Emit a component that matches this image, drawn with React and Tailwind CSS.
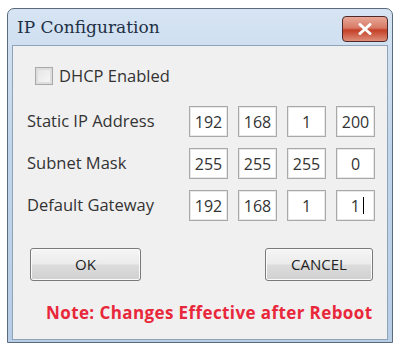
import React, { useState } from 'react';

const IpBox = ({ value, caret }) => (
  <div className="w-[39px] h-[31px] border border-[#a9a9a9] bg-white shadow-[inset_0_0_0_1px_#e8e8e8] flex items-center justify-center text-[16px] text-[#333]">
    {caret ? (
      <span className="flex items-center w-full justify-end pr-[10px]">
        {value}
        <span className="ml-[3px] w-px h-[17px] bg-black" />
      </span>
    ) : (
      value
    )}
  </div>
);

const IpRow = ({ label, values, caret }) => (
  <div className="flex items-center h-[31px]">
    <div className="w-[176px] pl-[14px] text-[16.5px] text-[#333]">{label}</div>
    <div className="flex gap-[10px]">
      {values.map((v, i) => (
        <IpBox key={i} value={v} caret={caret && i === values.length - 1} />
      ))}
    </div>
  </div>
);

const WinButton = ({ children, className }) => (
  <button
    type="button"
    className={`h-[33px] rounded-[3px] border border-[#7a7a7a] bg-[linear-gradient(to_bottom,#f6f6f6_0%,#ebebeb_48%,#dcdcdc_52%,#d0d0d0_100%)] shadow-[inset_0_0_0_1px_#fbfbfb] text-[15px] text-[#222] ${className}`}
  >
    {children}
  </button>
);

const App = () => {
  const [dhcp, setDhcp] = useState(false);

  return (
    <div className="w-[398px] h-[346px] bg-white pt-[8px] pl-[7px]" style={{ fontFamily: '"Open Sans", "Noto Sans", sans-serif' }}>
      <div className="w-[386px] h-[335px] rounded-t-[7px] border border-[#5a6b7c] bg-[linear-gradient(to_bottom,#d6e4f3,#c1d5ea_40%,#b7cde5)] flex flex-col">
        {/* title bar */}
        <div className="h-[36px] flex items-center justify-between pl-[9px] pr-[4px]">
          <span className="text-[17px] text-[#1e3045] mt-[2px]" style={{ fontFamily: '"DejaVu Serif", serif' }}>
            IP Configuration
          </span>
          <div className="w-[46px] h-[26px] mt-[3px] rounded-[4px] border border-[#4e2a2a] bg-[linear-gradient(to_bottom,#e9a898_0%,#d77a66_45%,#c43f28_55%,#df8f7a_100%)] flex items-center justify-center">
            <svg width="14" height="12" viewBox="0 0 14 12">
              <path d="M2 1.5 L12 10.5 M12 1.5 L2 10.5" stroke="white" strokeWidth="3" strokeLinecap="round" />
            </svg>
          </div>
        </div>

        {/* client area */}
        <div className="flex-1 mx-[4px] mb-[2px] border border-[#8fa4b8] bg-[#f0f0f0] flex flex-col">
          <label className="flex items-center mt-[20px] ml-[22px] h-[20px] cursor-pointer">
            <span
              onClick={() => setDhcp(!dhcp)}
              className="w-[18px] h-[18px] border border-[#a8a8a8] bg-[linear-gradient(to_bottom_right,#e4e4e4,#f8f8f8)] shadow-[inset_0_0_0_2px_#dedede] flex items-center justify-center text-[12px]"
            >
              {dhcp ? '✓' : ''}
            </span>
            <span className="ml-[6px] text-[16.5px] text-[#333]">DHCP Enabled</span>
          </label>

          <div className="flex flex-col gap-[11px] mt-[20px]">
            <IpRow label="Static IP Address" values={['192', '168', '1', '200']} />
            <IpRow label="Subnet Mask" values={['255', '255', '255', '0']} />
            <IpRow label="Default Gateway" values={['192', '168', '1', '1']} caret />
          </div>

          <div className="flex justify-between mt-[27px] pl-[17px] pr-[14px]">
            <WinButton className="w-[111px]">OK</WinButton>
            <WinButton className="w-[108px]">CANCEL</WinButton>
          </div>

          <div className="mt-[19px] pl-[33px] text-[17px] tracking-[0.4px] font-bold text-[#e8283a]">
            Note: Changes Effective after Reboot
          </div>
        </div>
      </div>
    </div>
  );
};

export default App;
